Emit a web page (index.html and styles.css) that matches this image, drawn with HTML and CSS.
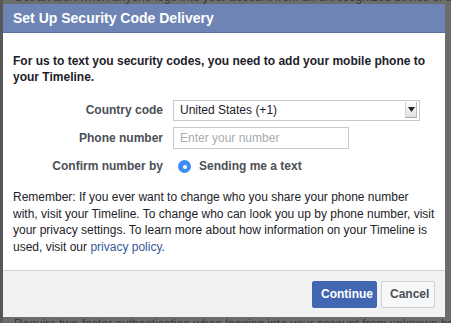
FILE: index.html
```html
<!DOCTYPE html>
<html>
<head>
<meta charset="utf-8">
<link rel="stylesheet" href="styles.css">
</head>
<body>
<div class="backdrop">
  <div class="bg-clip bg-top"><p class="bg-line">Get an alert when anyone logs into your account from an unrecognized device or browser.</p></div>
  <div class="bg-clip bg-bottom"><p class="bg-line">Require two-factor authentication when logging into your account from unknown browsers.</p></div>
</div>
<div class="dialog">
  <div class="dialog-header">Set Up Security Code Delivery</div>
  <div class="dialog-body">
    <p class="intro">For us to text you security codes, you need to add your mobile phone to your Timeline.</p>
    <div class="form">
      <div class="row">
        <span class="label">Country code</span>
        <div class="select">
          <span class="select-value">United States (+1)</span>
          <span class="select-arrow"><svg width="7" height="5" viewBox="0 0 7 5"><path d="M0 0 L7 0 L3.5 5 Z" fill="#222"/></svg></span>
        </div>
      </div>
      <div class="row">
        <span class="label">Phone number</span>
        <input class="input" type="text" placeholder="Enter your number">
      </div>
      <div class="row">
        <span class="label">Confirm number by</span>
        <span class="radio"><span class="radio-dot"></span></span>
        <span class="radio-text">Sending me a text</span>
      </div>
    </div>
    <p class="note">Remember: If you ever want to change who you share your phone number with, visit your Timeline. To change who can look you up by phone number, visit your privacy settings. To learn more about how information on your Timeline is used, visit our <a href="#" class="link">privacy policy</a>.</p>
  </div>
  <div class="dialog-footer">
    <button class="btn btn-primary">Continue</button>
    <button class="btn btn-default">Cancel</button>
  </div>
</div>
</body>
</html>
```

FILE: styles.css
```css
html, body {
  margin: 0;
  padding: 0;
}
body {
  width: 451px;
  height: 323px;
  overflow: hidden;
  position: relative;
  background: #6a6a6a;
  font-family: "Liberation Sans", Arial, Helvetica, sans-serif;
  font-size: 12px;
  color: #1d2129;
}
.backdrop {
  position: absolute;
  inset: 0;
  background: linear-gradient(to right, #585858 0, #585858 3px, #6c6c6c 3px);
}
.bg-clip {
  position: absolute;
  left: 14px;
  right: 0;
  overflow: hidden;
}
.bg-top {
  top: 0;
  height: 4px;
}
.bg-bottom {
  top: 317px;
  height: 6px;
}
.bg-line {
  margin: 0;
  font-size: 12px;
  line-height: 14px;
  color: #3a3a3a;
  white-space: nowrap;
  filter: blur(0.4px);
}
.bg-top .bg-line {
  margin-top: -10px;
}
.dialog {
  position: absolute;
  left: 3px;
  top: 4px;
  width: 442px;
  height: 313px;
  background: #fff;
  display: flex;
  flex-direction: column;
}
.dialog-header {
  height: 29px;
  line-height: 29px;
  background: #6d84b4;
  color: #fff;
  font-weight: bold;
  font-size: 14px;
  padding-left: 10px;
  border-bottom: 1px solid #5a71a0;
  box-sizing: border-box;
}
.dialog-body {
  flex: 1;
  padding: 20px 10px 0 10px;
}
.intro {
  margin: 0;
  font-weight: bold;
  line-height: 16px;
  color: #1d2129;
}
.form {
  margin-top: 14px;
  display: flex;
  flex-direction: column;
  gap: 6px;
}
.row {
  display: flex;
  align-items: center;
  height: 22px;
}
.label {
  width: 150px;
  text-align: right;
  font-weight: bold;
  color: #4b4f56;
  margin-right: 10px;
}
.select {
  width: 247px;
  height: 21px;
  box-sizing: border-box;
  border: 1px solid #c7c9ce;
  display: flex;
  align-items: center;
  justify-content: space-between;
  padding-left: 6px;
  padding-right: 2px;
  background: #fff;
  color: #1d2129;
}
.select-arrow {
  width: 12px;
  height: 16px;
  background: linear-gradient(#fdfdfd, #e2e2e2);
  border-left: 1px solid #d4d4d4;
  border-right: 1px solid #b8b8b8;
  border-bottom: 1px solid #a8a8a8;
  display: flex;
  align-items: center;
  justify-content: center;
  box-sizing: border-box;
}
.input {
  width: 176px;
  height: 22px;
  box-sizing: border-box;
  border: 1px solid #c7c9ce;
  padding: 0 6px;
  font-family: inherit;
  font-size: 12px;
  outline: none;
  margin: 0;
}
.input::placeholder {
  color: #a9abb0;
}
.radio {
  width: 13px;
  height: 13px;
  border-radius: 50%;
  background: #3b8df5;
  display: flex;
  align-items: center;
  justify-content: center;
  margin-left: 5px;
  margin-top: 1px;
}
.radio-dot {
  width: 4px;
  height: 4px;
  border-radius: 50%;
  background: #fff;
}
.radio-text {
  margin-left: 8px;
  font-weight: bold;
  color: #4b4f56;
}
.note {
  margin: 12px 0 0 0;
  line-height: 16.6px;
  color: #1d2129;
}
.link {
  color: #365899;
  text-decoration: none;
}
.dialog-footer {
  height: 47px;
  box-sizing: border-box;
  background: #f2f2f2;
  border-top: 1px solid #d0d1d5;
  display: flex;
  justify-content: flex-end;
  align-items: center;
  gap: 4px;
  padding-right: 10px;
}
.btn {
  height: 27px;
  font-family: inherit;
  font-size: 12px;
  font-weight: bold;
  border-radius: 2px;
  padding: 0 8px;
  margin: 0;
  cursor: pointer;
}
.btn-primary {
  background: #4267b2;
  border: 1px solid #4267b2;
  color: #fff;
  width: 65px;
}
.btn-default {
  background: #f6f7f9;
  border: 1px solid #ced0d4;
  color: #4b4f56;
  width: 54px;
}
```
